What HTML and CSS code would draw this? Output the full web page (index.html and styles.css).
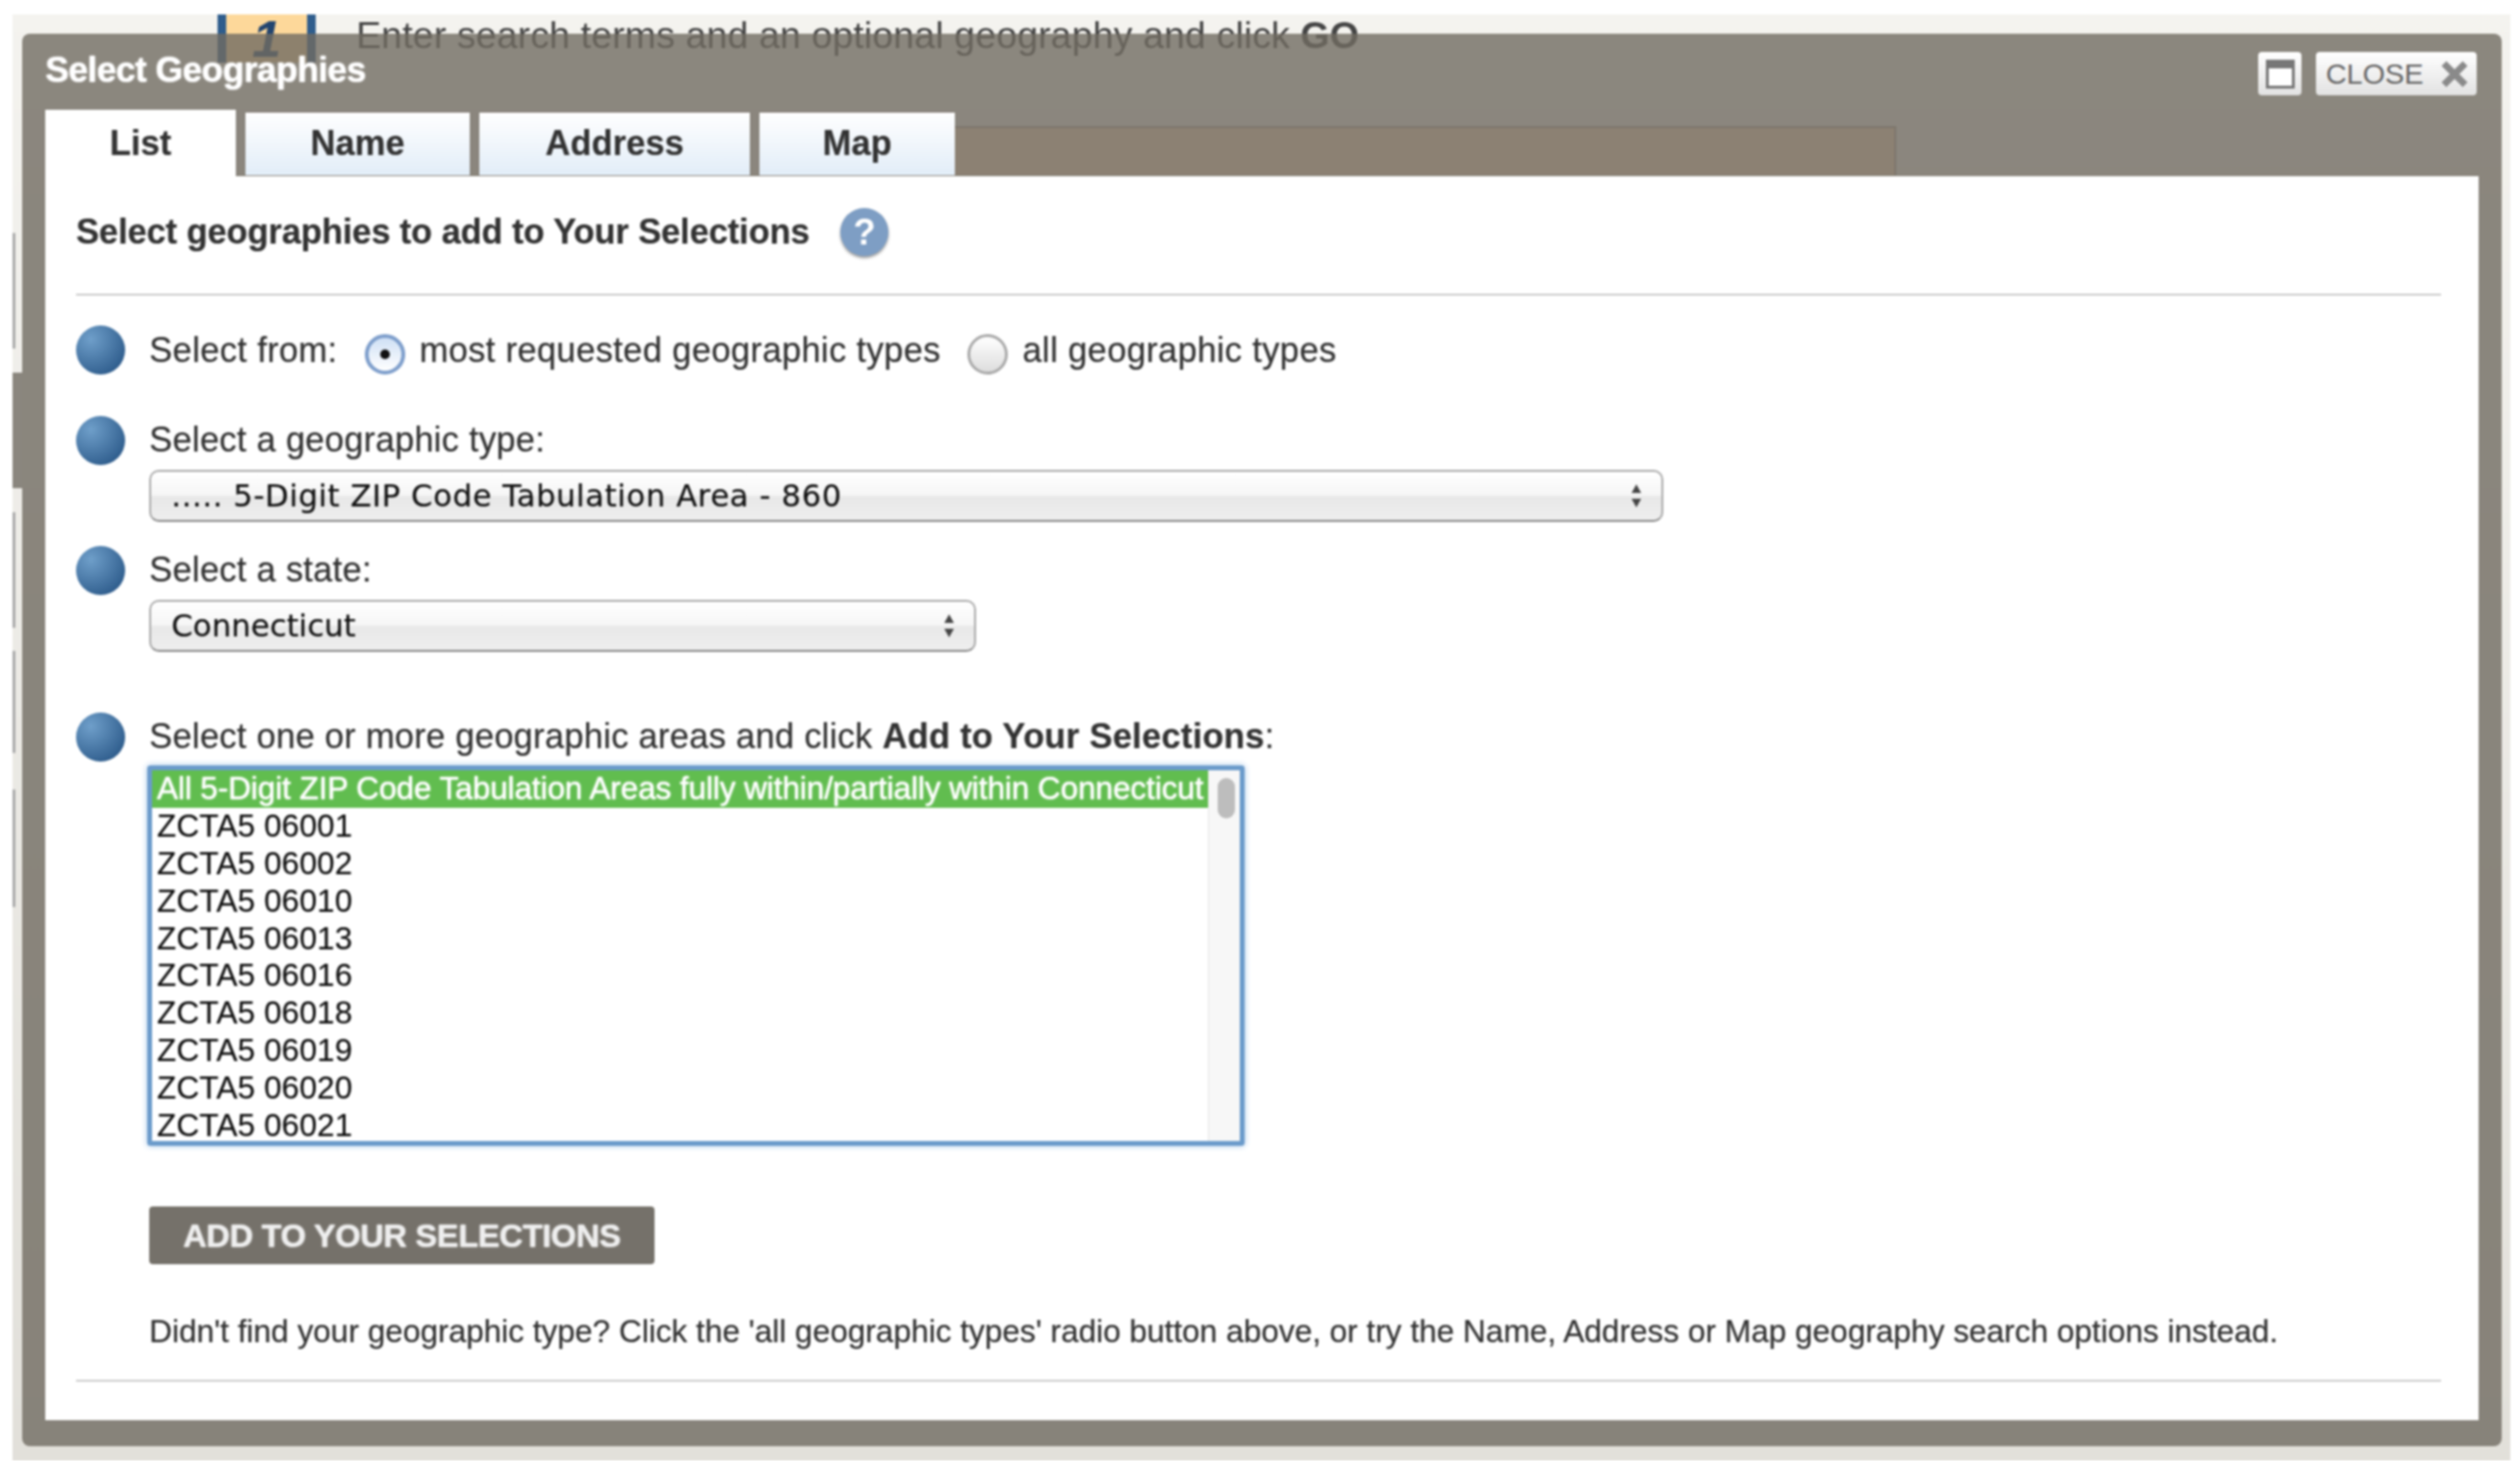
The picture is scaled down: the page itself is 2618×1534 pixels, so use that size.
FILE: index.html
```html
<!DOCTYPE html>
<html lang="en">
<head>
  <meta charset="UTF-8">
  <title>Select Geographies</title>
  <link rel="stylesheet" href="styles.css">
</head>
<body>
  <div class="backdrop">
    <!-- page content showing behind the dialog -->
    <div class="behind-step">
      <div class="step-box">1</div>
      <div class="step-text">Enter search terms and an optional geography and click <b>GO</b></div>
    </div>
    <div class="behind-side">
      <div class="side-line side-line-a"></div>
      <div class="side-band"></div>
      <div class="side-line side-line-b"></div>
      <div class="side-line side-line-c"></div>
      <div class="side-line side-line-d"></div>
    </div>

    <div class="modal">
      <header class="modal-head">
        <h1>Select Geographies</h1>
        <div class="modal-tools">
          <button class="tool-btn window-btn" aria-label="Maximize">
            <svg width="30" height="30" viewBox="0 0 30 30">
              <rect x="1.5" y="1.5" width="27" height="27" fill="#fff" stroke="#777" stroke-width="3"/>
              <rect x="1" y="1" width="28" height="8" fill="#777"/>
            </svg>
          </button>
          <button class="tool-btn close-btn">
            CLOSE
            <svg width="30" height="30" viewBox="0 0 30 30">
              <path d="M4 4 L26 26 M26 4 L4 26" stroke="#8a8a8a" stroke-width="7"/>
            </svg>
          </button>
        </div>
      </header>

      <nav class="tabs">
        <a class="tab active">List</a>
        <a class="tab tab-name">Name</a>
        <a class="tab tab-address">Address</a>
        <a class="tab tab-map">Map</a>
        <div class="tab-strip"></div>
      </nav>

      <main class="panel">
        <div class="panel-title">
          <h2>Select geographies to add to Your Selections</h2>
          <span class="help">?</span>
        </div>

        <div class="step step-from">
          <span class="bullet"></span>
          <div class="radios">
            <span>Select from:</span>
            <label class="radio-label"><input type="radio" name="from" checked> most requested geographic types</label>
            <label class="radio-label"><input type="radio" name="from"> all geographic types</label>
          </div>
        </div>

        <div class="step step-type">
          <span class="bullet"></span>
          <div>
            <div class="step-label">Select a geographic type:</div>
            <div class="select-wrap select-type">
              <select>
                <option>..... 5-Digit ZIP Code Tabulation Area - 860</option>
              </select>
              <svg class="select-arrows" width="14" height="28" viewBox="0 0 14 28"><path d="M7 2 L12 11 L2 11 Z M7 26 L12 17 L2 17 Z" fill="#444"/></svg>
            </div>
          </div>
        </div>

        <div class="step step-state">
          <span class="bullet"></span>
          <div>
            <div class="step-label">Select a state:</div>
            <div class="select-wrap select-state">
              <select>
                <option>Connecticut</option>
              </select>
              <svg class="select-arrows" width="14" height="28" viewBox="0 0 14 28"><path d="M7 2 L12 11 L2 11 Z M7 26 L12 17 L2 17 Z" fill="#444"/></svg>
            </div>
          </div>
        </div>

        <div class="step step-areas">
          <span class="bullet"></span>
          <div>
            <div class="step-label">Select one or more geographic areas and click <b>Add to Your Selections</b>:</div>
            <div class="listbox">
              <div class="list-items">
                <div class="list-item selected">All 5-Digit ZIP Code Tabulation Areas fully within/partially within Connecticut</div>
                <div class="list-item">ZCTA5 06001</div>
                <div class="list-item">ZCTA5 06002</div>
                <div class="list-item">ZCTA5 06010</div>
                <div class="list-item">ZCTA5 06013</div>
                <div class="list-item">ZCTA5 06016</div>
                <div class="list-item">ZCTA5 06018</div>
                <div class="list-item">ZCTA5 06019</div>
                <div class="list-item">ZCTA5 06020</div>
                <div class="list-item">ZCTA5 06021</div>
              </div>
              <div class="list-scroll"><span class="list-thumb"></span></div>
            </div>
            <button class="add-btn">ADD TO YOUR SELECTIONS</button>
            <p class="hint">Didn't find your geographic type? Click the 'all geographic types' radio button above, or try the Name, Address or Map geography search options instead.</p>
          </div>
        </div>

        <div class="panel-end"></div>
      </main>
    </div>
  </div>
</body>
</html>
```
FILE: styles.css
```css
* {
  box-sizing: border-box;
}

html, body {
  margin: 0;
  padding: 0;
  background: #fff;
}

body {
  font-family: "Liberation Sans", Arial, sans-serif;
  color: #333;
  overflow: hidden;
}

.backdrop {
  position: relative;
  width: 2595px;
  height: 1502px;
  margin: 15px 0 0 13px;
  padding: 20px 9px 15px 10px;
  background: linear-gradient(#f4f3ef, #e2e0da);
  filter: blur(0.8px);
}

/* stuff behind the dialog */
.behind-step {
  position: absolute;
  top: 0;
  left: 213px;
  display: flex;
}

.step-box {
  width: 102px;
  height: 50px;
  border-left: 9px solid #2f5d8c;
  border-right: 9px solid #2f5d8c;
  background: #fdd89a;
  color: #23456f;
  font-size: 54px;
  font-weight: bold;
  font-style: italic;
  line-height: 50px;
  text-align: center;
}

.step-text {
  margin-left: 42px;
  font-size: 39px;
  line-height: 44px;
  letter-spacing: 0.1px;
  white-space: nowrap;
  color: #444;
}

.behind-side {
  position: absolute;
  top: 227px;
  left: 0;
  width: 10px;
}

.side-line {
  width: 3px;
  background: #aaa;
}

.side-line-a { height: 120px; }
.side-line-b { height: 120px; margin-top: 25px; }
.side-line-c { height: 106px; margin-top: 24px; }
.side-line-d { height: 122px; margin-top: 38px; }

.side-band {
  height: 120px;
  margin-top: 25px;
  background: #8a867e;
}

/* dialog */
.modal {
  position: relative;
  height: 1467px;
  padding: 0 24px 27px;
  background: rgba(112, 107, 98, 0.8);
  border-radius: 8px;
}

.modal-head {
  display: flex;
  justify-content: space-between;
  align-items: flex-start;
  height: 79px;
  padding: 19px 2px 0 0;
}

.modal-head h1 {
  margin: -1px 0 0;
  font-size: 37px;
  line-height: 40px;
  letter-spacing: -0.7px;
  color: #fff;
  text-shadow: 0 0 2px #fff;
}

.modal-tools {
  display: flex;
  gap: 15px;
}

.tool-btn {
  display: flex;
  align-items: center;
  justify-content: center;
  height: 45px;
  padding: 0;
  border: none;
  border-radius: 4px;
  background: linear-gradient(#fff, #e2e2e2);
  font-family: inherit;
}

.window-btn {
  width: 45px;
}

.close-btn {
  width: 167px;
  gap: 17px;
  padding-left: 2px;
  font-size: 30px;
  color: #666;
}

.tabs {
  display: flex;
  align-items: flex-end;
  height: 69px;
}

.tab {
  display: block;
  height: 65px;
  margin-bottom: 1px;
  margin-left: 10px;
  background: linear-gradient(#fff, #e2edf8);
  font-size: 36px;
  font-weight: bold;
  line-height: 64px;
  text-align: center;
  text-shadow: 0 0 1px rgba(51, 51, 51, 0.5);
}

.tab.active {
  width: 198px;
  height: 69px;
  margin: 0;
  background: #fff;
  line-height: 70px;
}

.tab-name { width: 233px; }
.tab-address { width: 281px; }
.tab-map { width: 203px; }

.tab-strip {
  width: 978px;
  height: 51px;
  margin-bottom: 1px;
  background: #8c8173;
  border-top: 2px solid #7d766c;
  border-right: 2px solid #7d766c;
}

.panel {
  height: 1292px;
  padding: 33px 39px 0 32px;
  background: #fff;
}

.panel-title {
  display: flex;
  align-items: center;
  gap: 32px;
  height: 50px;
  margin-bottom: 39px;
}

.panel-title h2 {
  margin: 0;
  font-size: 36px;
  line-height: 50px;
  letter-spacing: -0.2px;
  text-shadow: 0 0 1px rgba(51, 51, 51, 0.5);
}

.help {
  width: 50px;
  height: 50px;
  border-radius: 50%;
  background: #7e9ec4;
  box-shadow: 0 2px 3px #999;
  color: #fff;
  font-size: 38px;
  font-weight: bold;
  line-height: 50px;
  text-align: center;
}

.step {
  display: grid;
  grid-template-columns: 51px 1fr;
  column-gap: 25px;
  font-size: 36px;
  line-height: 50px;
  letter-spacing: 0.2px;
  text-shadow: 0 0 1px rgba(51, 51, 51, 0.5);
}

.step-from {
  padding-top: 31px;
  border-top: 2px solid #ccc;
}

.step-type { margin-top: 43px; }
.step-state { margin-top: 25px; }
.step-areas { margin-top: 63px; }

.bullet {
  width: 51px;
  height: 51px;
  border-radius: 50%;
  background: radial-gradient(circle at 30% 28%, #6f9fca, #2a5888 85%);
}

.radios {
  display: flex;
  align-items: center;
  letter-spacing: 0.3px;
}

.radio-label {
  display: flex;
  align-items: center;
  gap: 15px;
  margin-left: 28px;
}

.radio-label input {
  appearance: none;
  position: relative;
  width: 42px;
  height: 42px;
  margin: 8px 0 0;
  border: 3px solid #aaa;
  border-radius: 50%;
  background: linear-gradient(#fff, #ddd);
}

.radio-label input:checked {
  border: 4px solid #7f9fcc;
  background: linear-gradient(#cfe0f5, #fff);
}

.radio-label input:checked::after {
  content: "";
  position: absolute;
  top: 12px;
  left: 12px;
  width: 10px;
  height: 10px;
  border-radius: 50%;
  background: #111;
}

.step-label {
  height: 50px;
}

.select-wrap {
  position: relative;
  height: 54px;
  margin-top: 6px;
}

.select-type { width: 1573px; }
.select-state { width: 859px; }

.select-wrap select {
  appearance: none;
  display: block;
  width: 100%;
  height: 100%;
  padding: 0 21px;
  border: 2px solid #aaa;
  border-bottom-color: #888;
  border-radius: 10px;
  background: linear-gradient(#fff, #f6f6f6 48%, #e8e8e8 52%, #eee);
  color: #111;
  font-family: "DejaVu Sans", sans-serif;
  font-size: 32px;
  text-shadow: 0 0 1px rgba(17, 17, 17, 0.4);
}

.select-type select {
  letter-spacing: 0.55px;
}

.select-arrows {
  position: absolute;
  top: 13px;
  right: 21px;
}

.listbox {
  display: flex;
  width: 1140px;
  height: 395px;
  margin: 5px 0 0 -2px;
  border: 5px solid #6b9bcb;
  border-radius: 3px;
  box-shadow: 0 0 6px #9dc0e4;
  overflow: hidden;
}

.list-items {
  flex: 1;
  overflow: hidden;
}

.list-item {
  height: 38.9px;
  padding-left: 5px;
  font-size: 33px;
  line-height: 38.9px;
  color: #111;
  white-space: nowrap;
  letter-spacing: 0;
  text-shadow: 0 0 1px rgba(17, 17, 17, 0.4);
}

.list-item.selected {
  background: #61bd4f;
  color: #fff;
  letter-spacing: -0.2px;
  text-shadow: 0 0 2px #fff;
}

.list-scroll {
  width: 33px;
  padding: 8px 0 0 9px;
  background: #f7f7f7;
  border-left: 1px solid #e6e6e6;
}

.list-thumb {
  display: block;
  width: 18px;
  height: 42px;
  border-radius: 9px;
  background: #bdbdbd;
}

.add-btn {
  display: block;
  width: 525px;
  height: 60px;
  margin-top: 63px;
  padding: 0;
  border: none;
  border-radius: 4px;
  background: #75716a;
  color: #eee;
  font-family: inherit;
  font-size: 34px;
  font-weight: bold;
  letter-spacing: -0.4px;
  text-shadow: 0 0 2px #eee;
}

.hint {
  margin: 45px 0 0;
  font-size: 33px;
  line-height: 50px;
  letter-spacing: -0.08px;
  white-space: nowrap;
}

.panel-end {
  height: 2px;
  margin-top: 25px;
  background: #ccc;
}
```
